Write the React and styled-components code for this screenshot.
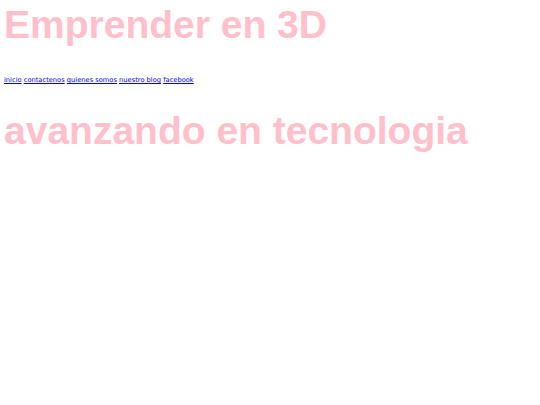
import React from "react";
import styled, { createGlobalStyle } from "styled-components";

const GlobalStyle = createGlobalStyle`
  body {
    margin: 0;
    padding: 3px 4px 0;
    background: #ffffff;
  }
`;

const Title = styled.h1`
  margin: 0;
  font-family: Arial, "Liberation Sans", Helvetica, sans-serif;
  font-weight: 700;
  font-size: 39px;
  color: pink;
`;

const Nav = styled.nav`
  margin-top: 29px;
  font-family: Verdana, "DejaVu Sans", sans-serif;
  font-size: 6.7px;
`;

const NavLink = styled.a`
  color: #0000ee;
  text-decoration: underline;
`;

const Subtitle = styled.h2`
  margin: 25px 0 0;
  font-family: Arial, "Liberation Sans", Helvetica, sans-serif;
  font-weight: 700;
  font-size: 39px;
  color: pink;
`;

const links = ["inicio", "contactenos", "quienes somos", "nuestro blog", "facebook"];

function App() {
  return (
    <>
      <GlobalStyle />
      <Title>Emprender en 3D</Title>
      <Nav>
        {links.map((l, i) => (
          <React.Fragment key={i}>
            <NavLink href="#">{l}</NavLink>{" "}
          </React.Fragment>
        ))}
      </Nav>
      <Subtitle>avanzando en tecnologia</Subtitle>
    </>
  );
}

export default App;
